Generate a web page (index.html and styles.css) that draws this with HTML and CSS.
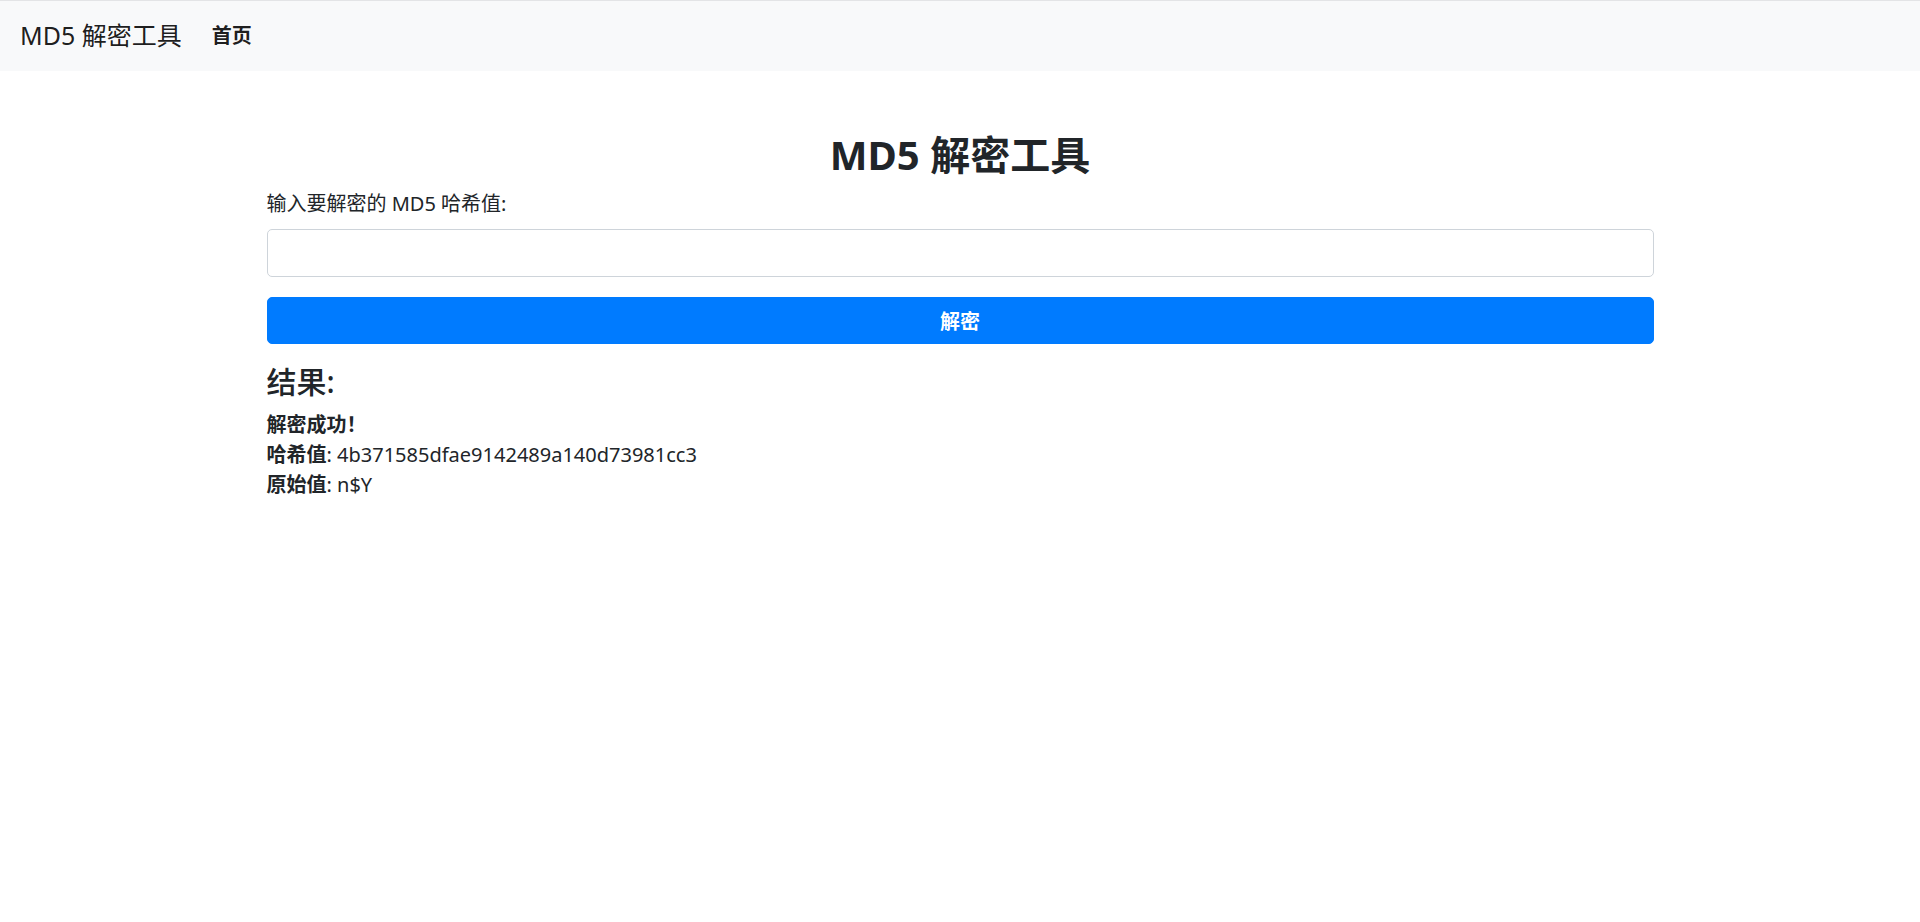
FILE: index.html
```html
<!DOCTYPE html>
<html lang="zh-CN">
	<head>
		<meta charset="utf-8">
		<title>MD5 解密工具</title>
		<link rel="stylesheet" href="styles.css">
	</head>
	<body>
		<nav class="navbar">
			<a class="brand" href="#">MD5 解密工具</a>
			<a class="nav-link" href="#">首页</a>
		</nav>
		<main class="container">
			<h2 class="title">MD5 解密工具</h2>
			<form class="form">
				<div class="form-group">
					<label for="hash">输入要解密的 MD5 哈希值:</label>
					<input type="text" id="hash" class="form-control">
				</div>
				<button type="button" class="btn">解密</button>
			</form>
			<h4 class="result-title">结果:</h4>
			<div class="result">
				<strong>解密成功！</strong><br>
				<strong>哈希值</strong>: 4b371585dfae9142489a140d73981cc3<br>
				<strong>原始值</strong>: n$Y
			</div>
		</main>
	</body>
</html>
```

FILE: styles.css
```css
/* bootstrap-ish, everything at 125% */
body{
	margin:0;
	font-family:"Noto Sans","Noto Sans CJK SC",sans-serif;
	font-size:20px;
	line-height:1.5;
	color:#212529;
	background-color:#fff;
}
a{
	text-decoration:none;
}
.navbar{
	display:flex;
	align-items:center;
	padding:10px 20px;
	background-color:#f8f9fa;
	border-top:1px solid #e3e4e6;
}
.brand{
	font-size:25px;
	line-height:37.5px;
	padding:6px 0;
	margin-right:20px;
	color:rgba(0,0,0,.9);
}
.nav-link{
	padding:10px;
	font-weight:bold;
	color:rgba(0,0,0,.9);
}
.container{
	max-width:1387px;
	margin:0 auto;
}
.title{
	margin:60px 0 10px;
	text-align:center;
	font-size:40px;
	line-height:48px;
	font-weight:bold;
}
label{
	display:inline-block;
	margin-bottom:10px;
}
.form-group{
	margin-bottom:20px;
}
.form-control{
	display:block;
	box-sizing:border-box;
	width:100%;
	height:47.5px;
	padding:7.5px 15px;
	font-size:20px;
	border:1px solid #ced4da;
	border-radius:5px;
	background-color:#fff;
}
.btn{
	display:block;
	width:100%;
	height:47.5px;
	font-family:inherit;
	font-size:20px;
	font-weight:bold;
	color:#fff;
	background-color:#007bff;
	border:1px solid #007bff;
	border-radius:5px;
}
.result-title{
	margin:20px 0 10px;
	font-size:30px;
	line-height:36px;
	font-weight:500;
}
.result{
	line-height:30px;
}
```
